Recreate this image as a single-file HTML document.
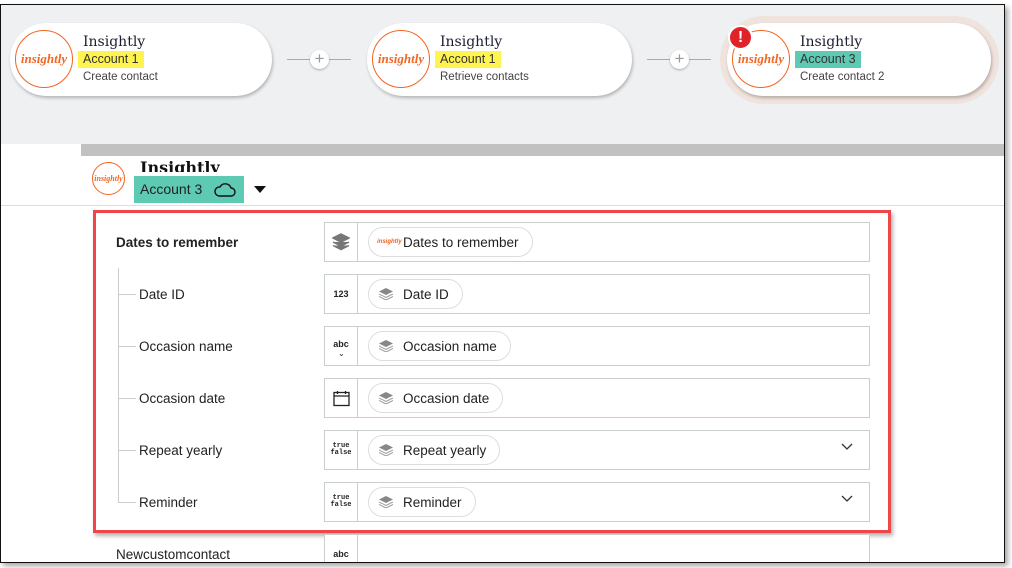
<!DOCTYPE html>
<html><head><meta charset="utf-8"><style>
*{box-sizing:border-box;margin:0;padding:0}
body{width:1012px;height:568px;background:#fff;font-family:"Liberation Sans",sans-serif;position:relative;overflow:hidden}
.frame{position:absolute;left:0;top:4px;width:1005px;height:559px;border:1px solid #111;background:#fff;overflow:hidden;box-shadow:3px 3px 5px rgba(0,0,0,.35)}
.top{position:absolute;left:0;top:0;width:1004px;height:139px;background:#eff0f2}
.bar{position:absolute;left:80px;top:139px;width:924px;height:12px;background:#c1c1c1}
.card{position:absolute;top:18px;height:73px;background:#fff;border-radius:37px;box-shadow:1px 2px 3px rgba(0,0,0,.25)}
.logo{position:absolute;border:1.5px solid #f26522;border-radius:50%;background:#fff;color:#f26522;font-family:"Liberation Serif",serif;font-style:italic;font-weight:bold;text-align:center}
.card .logo{left:5px;top:7px;width:58px;height:58px;font-size:13px;line-height:56px}
.t1{position:absolute;left:73px;top:11px;font-size:14px;color:#1b1e2e;font-family:"DejaVu Serif","Liberation Serif",serif}
.acc{position:absolute;left:68px;top:28px;height:17px;padding:0 5px;font-size:12.5px;line-height:17px;color:#333}
.t3{position:absolute;left:73px;top:48px;font-size:11.5px;color:#444}
.conn{position:absolute;top:54px;height:1px;width:64px;background:#aaa}
.plus{position:absolute;top:45px;width:19px;height:19px;border-radius:50%;background:#fff;box-shadow:0 1px 2px rgba(0,0,0,.3);color:#999;font-size:17px;line-height:18px;text-align:center}
.hdr{position:absolute;left:0;top:151px;width:1004px;height:50px;border-bottom:1px solid #ddd;background:#fff}
.box{position:absolute;left:92px;top:205px;width:798px;height:323px;border:3px solid #f0464a;box-shadow:2px 3px 4px rgba(0,0,0,.3)}
.lbl{position:absolute;font-size:13.5px;color:#222}
.fld{position:absolute;left:323px;width:546px;height:40px;border:1px solid #c9cfcf;background:#fff}
.ic{position:absolute;left:0;top:0;width:33px;height:38px;border-right:1px solid #c9cfcf;font-size:9px;font-weight:bold;text-align:center;color:#222}
.pill{position:absolute;left:43px;top:4px;height:30px;border:1px solid #ddd;border-radius:15px;padding:0 13px 0 34px;font-size:13.5px;line-height:29px;color:#222}
.pill svg{position:absolute;left:10px;top:8px}
.chev{position:absolute;right:16px;top:12px}
.tree{position:absolute;left:117px;top:263px;width:1px;height:235px;background:#ccc}
.tk{position:absolute;left:117px;width:18px;height:1px;background:#ccc}
</style></head><body>
<div class="frame">
<div class="top"></div>
<div class="bar"></div>
<div class="card" style="left:9px;width:262px"><div class="logo">insightly</div><div class="t1">Insightly</div><div class="acc" style="background:#fff44f">Account 1</div><div class="t3">Create contact</div></div>
<div class="conn" style="left:286px"></div><div class="plus" style="left:309px">+</div>
<div class="card" style="left:366px;width:265px"><div class="logo">insightly</div><div class="t1">Insightly</div><div class="acc" style="background:#fff44f">Account 1</div><div class="t3">Retrieve contacts</div></div>
<div class="conn" style="left:646px"></div><div class="plus" style="left:669px">+</div>
<div style="position:absolute;left:719px;top:11px;width:279px;height:88px;border-radius:44px;background:#f0e2dc"></div>
<div class="card" style="left:726px;width:264px"><div class="logo">insightly</div><div class="t1">Insightly</div><div class="acc" style="background:#5ecab4">Account 3</div><div class="t3">Create contact 2</div></div>
<div style="position:absolute;left:727px;top:20px;width:25px;height:25px;border-radius:50%;background:#e0222a;border:2px solid #fff;color:#fff;font-weight:bold;font-size:16px;line-height:21px;text-align:center">!</div>
<div class="hdr">
<div class="logo" style="left:91px;top:6px;width:33px;height:33px;font-size:8px;line-height:31px">insightly</div>
<div style="position:absolute;left:139px;top:2px;height:14px;overflow:hidden;font-size:16px;font-weight:bold;line-height:20px;color:#111;font-family:'DejaVu Serif',serif">Insightly</div>
<div style="position:absolute;left:133px;top:20px;width:110px;height:27px;background:#5ecab4;font-size:14px;line-height:27px;padding-left:6px;color:#222">Account 3
<svg style="position:absolute;left:80px;top:7px" width="22" height="14" viewBox="0 0 22 14"><path d="M5 13H17a4 4 0 0 0 0-8 6 6 0 0 0-11-1 4.5 4.5 0 0 0-1 9z" fill="none" stroke="#111" stroke-width="1.4"/></svg></div>
<div style="position:absolute;left:253px;top:30px;border:6px solid transparent;border-top:7px solid #111;border-bottom:0"></div>
</div>
<div class="box"></div>
<div class="tree"></div>
<div class="lbl" style="left:115px;top:230px;font-weight:bold">Dates to remember</div>
<div class="fld" style="top:217px"><div class="ic"><svg style="margin-top:10px" width="18" height="18" viewBox="0 0 18 18"><path d="M9 1 17 5 9 9 1 5z M1 9 9 13 17 9 M1 12.5 9 16.5 17 12.5" fill="#777" stroke="#777" stroke-width="1.5"/></svg></div><div class="pill"><span style="position:absolute;left:8px;top:0;color:#f26522;font-size:6px;font-style:italic;font-weight:bold">insightly</span>Dates to remember</div></div>
<div class="tk" style="top:289px"></div><div class="lbl" style="left:138px;top:282px">Date ID</div>
<div class="fld" style="top:269px"><div class="ic" style="line-height:38px">123</div><div class="pill"><svg width="14" height="12" viewBox="0 0 14 12"><path d="M7 0 14 3.5 7 7 0 3.5z" fill="#888"/><path d="M0 6 7 9.5 14 6M0 8.5 7 12 14 8.5" fill="none" stroke="#999"/></svg>Date ID</div></div>
<div class="tk" style="top:341px"></div><div class="lbl" style="left:138px;top:334px">Occasion name</div>
<div class="fld" style="top:321px"><div class="ic" style="line-height:34px">abc<span style="position:absolute;left:13px;top:10px;font-weight:normal;font-size:8px">⌄</span></div><div class="pill"><svg width="14" height="12" viewBox="0 0 14 12"><path d="M7 0 14 3.5 7 7 0 3.5z" fill="#888"/><path d="M0 6 7 9.5 14 6M0 8.5 7 12 14 8.5" fill="none" stroke="#999"/></svg>Occasion name</div></div>
<div class="tk" style="top:393px"></div><div class="lbl" style="left:138px;top:386px">Occasion date</div>
<div class="fld" style="top:373px"><div class="ic"><svg style="margin-top:11px" width="17" height="17" viewBox="0 0 17 17"><rect x="1" y="2.5" width="15" height="13" fill="none" stroke="#222" stroke-width="1.3"/><path d="M1 6H16M4.5 1V4M12.5 1V4" stroke="#222" stroke-width="1.3"/></svg></div><div class="pill"><svg width="14" height="12" viewBox="0 0 14 12"><path d="M7 0 14 3.5 7 7 0 3.5z" fill="#888"/><path d="M0 6 7 9.5 14 6M0 8.5 7 12 14 8.5" fill="none" stroke="#999"/></svg>Occasion date</div></div>
<div class="tk" style="top:445px"></div><div class="lbl" style="left:138px;top:438px">Repeat yearly</div>
<div class="fld" style="top:425px"><div class="ic" style="font-family:'Liberation Mono',monospace;font-size:7px;line-height:7px;padding-top:12px">true<br>false</div><div class="pill"><svg width="14" height="12" viewBox="0 0 14 12"><path d="M7 0 14 3.5 7 7 0 3.5z" fill="#888"/><path d="M0 6 7 9.5 14 6M0 8.5 7 12 14 8.5" fill="none" stroke="#999"/></svg>Repeat yearly</div><svg class="chev" width="12" height="8" viewBox="0 0 12 8"><path d="M1 1 6 6 11 1" fill="none" stroke="#333" stroke-width="1.3"/></svg></div>
<div class="tk" style="top:497px"></div><div class="lbl" style="left:138px;top:490px">Reminder</div>
<div class="fld" style="top:477px"><div class="ic" style="font-family:'Liberation Mono',monospace;font-size:7px;line-height:7px;padding-top:12px">true<br>false</div><div class="pill"><svg width="14" height="12" viewBox="0 0 14 12"><path d="M7 0 14 3.5 7 7 0 3.5z" fill="#888"/><path d="M0 6 7 9.5 14 6M0 8.5 7 12 14 8.5" fill="none" stroke="#999"/></svg>Reminder</div><svg class="chev" width="12" height="8" viewBox="0 0 12 8"><path d="M1 1 6 6 11 1" fill="none" stroke="#333" stroke-width="1.3"/></svg></div>
<div class="lbl" style="left:115px;top:542px">Newcustomcontact</div>
<div class="fld" style="top:529px"><div class="ic" style="line-height:38px">abc</div></div>
</div>
</body></html>
